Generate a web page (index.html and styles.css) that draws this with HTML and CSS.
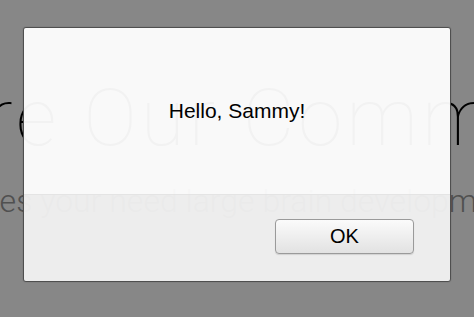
FILE: index.html
```html
<!DOCTYPE html>
<html>
<head>
<meta charset="utf-8">
<link rel="stylesheet" href="styles.css">
</head>
<body>
<main class="page">
  <h1 class="hero-title">Explore Our Community</h1>
  <p class="hero-sub">Resources your need large brain development</p>
</main>
<div class="overlay"></div>
<div class="dialog" role="alertdialog">
  <div class="dialog-body">
    <p class="dialog-message">Hello, Sammy!</p>
  </div>
  <div class="dialog-footer">
    <button class="dialog-button" type="button">OK</button>
  </div>
</div>
</body>
</html>
```
FILE: styles.css
```css
html, body {
  margin: 0;
  padding: 0;
  width: 474px;
  height: 317px;
  overflow: hidden;
  background: #ffffff;
}

.page {
  padding-top: 78px;
  white-space: nowrap;
  font-family: Roboto, "Liberation Sans", sans-serif;
}

.hero-title {
  margin: 0 0 23px -222px;
  font-size: 80px;
  line-height: 80px;
  font-weight: 100;
  letter-spacing: 4px;
  color: #000;
}

.hero-sub {
  margin: 0 0 0 -116px;
  font-size: 32px;
  line-height: 40px;
  font-weight: 300;
  color: #979797;
}

.overlay {
  position: absolute;
  inset: 0;
  background: rgba(0, 0, 0, 0.47);
}

.dialog {
  position: absolute;
  left: 23px;
  top: 27px;
  width: 426px;
  height: 253px;
  border: 1px solid #4f4f4f;
  border-radius: 3px;
  overflow: hidden;
  display: flex;
  flex-direction: column;
  box-shadow: 0 0 1px rgba(0, 0, 0, 0.4);
  font-family: "Liberation Sans", Arial, sans-serif;
}

.dialog-body {
  height: 167px;
  padding-top: 71px;
  box-sizing: border-box;
  background: rgba(255, 255, 255, 0.95);
  border-bottom: 1px solid rgba(225, 225, 225, 0.9);
}

.dialog-message {
  margin: 0;
  text-align: center;
  font-size: 21px;
  line-height: 24px;
  color: #000;
}

.dialog-footer {
  flex: 1;
  display: flex;
  justify-content: flex-end;
  align-items: flex-start;
  padding: 24px 36px 0 0;
  background: rgba(242, 242, 242, 0.95);
}

.dialog-button {
  width: 139px;
  height: 35px;
  border: 1px solid #9a9a9a;
  border-radius: 4px;
  background: linear-gradient(#fbfbfb, #e2e2e2);
  box-shadow: 0 1px 1px rgba(0, 0, 0, 0.12);
  font-family: "Liberation Sans", Arial, sans-serif;
  font-size: 20px;
  color: #000;
  padding: 0;
}
```
